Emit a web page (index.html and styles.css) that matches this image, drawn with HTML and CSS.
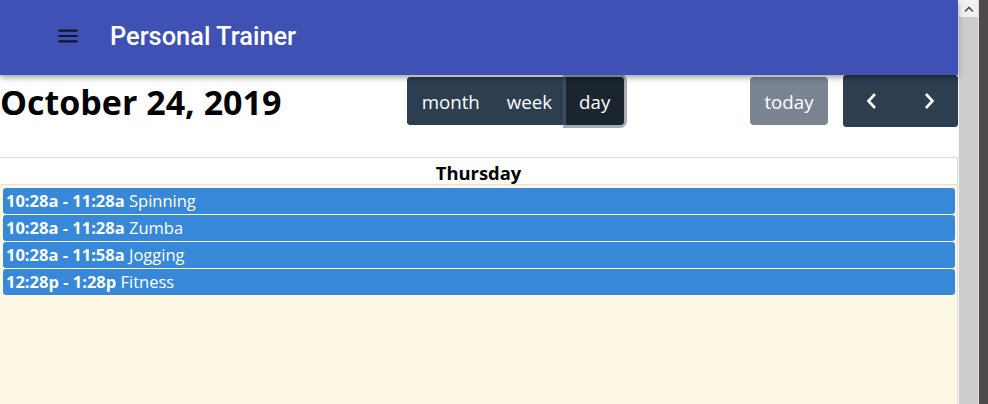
FILE: index.html
```html
<!DOCTYPE html>
<html>
<head>
<meta charset="utf-8">
<link rel="stylesheet" href="styles.css">
</head>
<body>
<div class="page">
  <div class="main">
    <header class="appbar">
      <svg class="menu" width="26" height="26" viewBox="0 0 24 24"><path d="M3 18h18v-2H3v2zm0-5h18v-2H3v2zm0-7v2h18V6H3z" fill="#14172a"/></svg>
      <span class="apptitle">Personal Trainer</span>
    </header>
    <div class="toolbar">
      <h2 class="caltitle">October 24, 2019</h2>
      <div class="btngroup">
        <button class="btn">month</button>
        <button class="btn">week</button>
        <button class="btn active">day</button>
      </div>
      <div class="rightchunk">
        <button class="btn today">today</button>
        <div class="btngroup navgroup">
          <button class="btn nav"><svg width="14" height="20" viewBox="0 0 14 20"><path d="M10 3 L3.5 10 L10 17" fill="none" stroke="#fff" stroke-width="2.6"/></svg></button>
          <button class="btn nav"><svg width="14" height="20" viewBox="0 0 14 20"><path d="M4 3 L10.5 10 L4 17" fill="none" stroke="#fff" stroke-width="2.6"/></svg></button>
        </div>
      </div>
    </div>
    <div class="cal">
      <div class="dayhead">Thursday</div>
      <div class="daybody">
        <div class="event"><b>10:28a - 11:28a</b> Spinning</div>
        <div class="event"><b>10:28a - 11:28a</b> Zumba</div>
        <div class="event"><b>10:28a - 11:58a</b> Jogging</div>
        <div class="event"><b>12:28p - 1:28p</b> Fitness</div>
      </div>
    </div>
  </div>
  <div class="scrollbar"><div class="arrow"><svg width="10" height="6" viewBox="0 0 10 6"><path d="M1 5.5 L5 1.5 L9 5.5" fill="none" stroke="#505050" stroke-width="1.6"/></svg></div></div>
  <div class="edge"></div>
</div>
</body>
</html>
```
FILE: styles.css
```css
html, body {
  margin: 0;
  padding: 0;
  height: 100%;
  overflow: hidden;
}
body {
  font-family: "Open Sans", "Noto Sans", sans-serif;
  background: #4f4a4a;
}
.page {
  display: flex;
  width: 100%;
  height: 404px;
  background: #4f4a4a;
}
.main {
  width: 958px;
  flex: none;
  display: flex;
  flex-direction: column;
  background: #fff;
}
.appbar {
  position: relative;
  z-index: 2;
  height: 75px;
  flex: none;
  background: #3f51b5;
  display: flex;
  align-items: center;
  padding-left: 55px;
  box-shadow: 0 2px 4px -1px rgba(0,0,0,.2), 0 4px 5px 0 rgba(0,0,0,.14), 0 1px 10px 0 rgba(0,0,0,.12);
  box-sizing: border-box;
}
.menu {
  display: block;
  margin-top: -4px;
}
.apptitle {
  margin-left: 29px;
  font-family: Roboto, sans-serif;
  font-weight: 500;
  font-size: 25.4px;
  color: #fff;
  margin-top: -4px;
}
.toolbar {
  display: flex;
  justify-content: space-between;
  align-items: center;
  height: 52px;
  margin-bottom: 30px;
}
.caltitle {
  margin: 0;
  font-weight: 700;
  font-size: 34px;
  color: #000;
  line-height: 1;
  margin-top: 2px;
}
.btngroup {
  display: flex;
  border-radius: 4px;
  background: #2c3e50;
}
.btn {
  font-family: "Open Sans", "Noto Sans", sans-serif;
  font-size: 18.7px;
  color: #fff;
  background: #2c3e50;
  border: 0;
  height: 48px;
  padding: 0 13.5px;
  margin: 0;
  border-radius: 4px;
  cursor: pointer;
}
.btngroup .btn {
  border-radius: 0;
}
.btngroup .btn:first-child {
  border-radius: 4px 0 0 4px;
  padding-left: 14.5px;
}
.btngroup .btn:last-child {
  border-radius: 0 4px 4px 0;
}
.btn.active {
  background: #1a252f;
  padding: 0 14px 0 13.5px;
  box-shadow: 0 0 0 3px rgba(76,91,106,.5);
  position: relative;
}
.rightchunk {
  display: flex;
  align-items: center;
  gap: 15px;
}
.btn.today {
  background: #7b8591;
  width: 78px;
  padding: 0;
}
.navgroup .btn.nav {
  height: 52px;
  width: 57.5px;
  padding: 0;
  display: flex;
  align-items: center;
  justify-content: center;
}
.cal {
  flex: 1;
  display: flex;
  flex-direction: column;
  border-top: 1px solid #ddd;
  border-right: 1px solid #ddd;
}
.dayhead {
  height: 27px;
  box-sizing: border-box;
  text-align: center;
  font-weight: 700;
  font-size: 18.4px;
  line-height: 30px;
  color: #000;
  border-bottom: 1px solid #e9e2c8;
  background: #fff;
}
.daybody {
  flex: 1;
  background: #fcf8e3;
  padding-top: 2px;
}
.event {
  margin: 1px 2px 0 3px;
  height: 26px;
  box-sizing: border-box;
  background: #3788d8;
  border-radius: 3px;
  color: #fff;
  font-size: 16.5px;
  line-height: 26px;
  padding-left: 3px;
  white-space: nowrap;
}
.event b {
  font-weight: 700;
}
.scrollbar {
  width: 19px;
  flex: none;
  background: #cdcdcd;
  border-left: 1px solid #f4f4f4;
}
.arrow {
  height: 17px;
  background: #f1f1f1;
  display: flex;
  align-items: center;
  justify-content: center;
}
.edge {
  flex: 1;
  background: #4f4a4a;
  border-left: 1px solid #e0e0e0;
}
```
